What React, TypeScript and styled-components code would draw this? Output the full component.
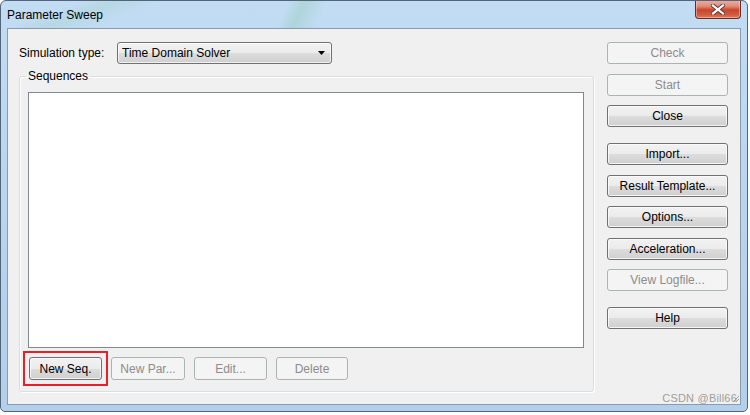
import React from 'react';
import styled, { createGlobalStyle, css } from 'styled-components';

const Global = createGlobalStyle`
  html, body { margin: 0; padding: 0; background: #ffffff; }
  body {
    width: 750px;
    height: 415px;
    overflow: hidden;
    font-family: "Liberation Sans", Arial, sans-serif;
    font-size: 12px;
    color: #000;
  }
  * { box-sizing: border-box; }
`;

const Window = styled.div`
  position: relative;
  width: 748px;
  height: 412px;
  border: 1px solid #52657a;
  border-radius: 6px 6px 5px 5px;
  background: linear-gradient(180deg, #c2dcf3 0%, #b7d3ee 60%, #b2cfeb 100%);
  padding: 0 6px 6px 6px;
  display: flex;
  flex-direction: column;
  overflow: hidden;
`;

const TitleBar = styled.div`
  height: 27px;
  flex: 0 0 27px;
  display: flex;
  align-items: flex-start;
  background:
    linear-gradient(115deg, transparent 38%, rgba(140, 200, 170, 0.35) 40%, transparent 43%),
    linear-gradient(160deg, transparent 10%, rgba(150, 205, 180, 0.25) 14%, transparent 20%);
  margin: 0 -6px;
  padding: 0 6px;
`;

const Title = styled.div`
  font-size: 12px;
  line-height: 14px;
  margin-top: 7px;
  color: #000;
`;

const CloseButton = styled.div`
  margin-left: auto;
  margin-top: -1px;
  width: 46px;
  height: 19px;
  border: 1px solid #6e2a22;
  border-top: none;
  border-radius: 0 0 4px 4px;
  background: linear-gradient(180deg, #eab1a4 0%, #e08b78 35%, #c9452d 55%, #cf5a3e 80%, #e07a55 100%);
  box-shadow: inset 0 0 0 1px rgba(255, 220, 210, 0.45);
  display: flex;
  align-items: center;
  justify-content: center;
`;

const Client = styled.div`
  flex: 1;
  border: 1px solid #8a9bad;
  background: #f0f0f0;
  display: flex;
  padding: 13px 12px 0 11px;
  gap: 13px;
`;

const LeftCol = styled.div`
  width: 575px;
  display: flex;
  flex-direction: column;
`;

const TypeRow = styled.div`
  display: flex;
  align-items: center;
  height: 22px;
`;

const Label = styled.span`
  width: 98px;
  line-height: 14px;
`;

const Select = styled.div`
  width: 215px;
  height: 22px;
  border: 1px solid #707070;
  border-radius: 3px;
  background: linear-gradient(180deg, #f2f2f2 0%, #ebebeb 50%, #dddddd 50%, #cfcfcf 100%);
  box-shadow: inset 0 0 0 1px rgba(255, 255, 255, 0.7);
  display: flex;
  align-items: center;
  padding: 0 6px 0 4px;
  line-height: 14px;
`;

const SelectText = styled.span`
  flex: 1;
`;

const Group = styled.fieldset`
  margin: 5px 0 0 0;
  padding: 0 9px 11px 8px;
  min-width: 0;
  border: 1px solid #d5dfe5;
  border-radius: 3px;
  box-shadow: inset 1px 1px 0 #ffffff, 1px 1px 0 #ffffff;
`;

const Legend = styled.legend`
  margin-left: -2px;
  padding: 0 2px;
  font-size: 12px;
  line-height: 14px;
`;

const ListBox = styled.div`
  margin-top: 9px;
  height: 256px;
  border: 1px solid #828790;
  background: #ffffff;
`;

const ButtonRow = styled.div`
  display: flex;
  gap: 9px;
  margin-top: 9px;
  padding-left: 1px;
`;

const Highlight = styled.div`
  display: flex;
  outline: 2px solid #e8202a;
  outline-offset: 4px;
`;

const Btn = styled.div<{ $disabled?: boolean; $w?: number }>`
  width: ${(p) => (p.$w ? `${p.$w}px` : '100%')};
  height: 23px;
  border-radius: 3px;
  display: flex;
  align-items: center;
  justify-content: center;
  line-height: 14px;
  white-space: nowrap;
  ${(p) =>
    p.$disabled
      ? css`
          border: 1px solid #adb2b5;
          background: #f4f4f4;
          color: #8c8c8c;
        `
      : css`
          border: 1px solid #707070;
          background: linear-gradient(180deg, #f2f2f2 0%, #ebebeb 50%, #dddddd 50%, #cfcfcf 100%);
          box-shadow: inset 0 0 0 1px rgba(252, 252, 252, 0.8);
          color: #000;
        `}
`;

const RightCol = styled.div`
  width: 121px;
  display: flex;
  flex-direction: column;
  gap: 9.5px;
`;

const RightBtn = styled(Btn)<{ $groupStart?: boolean }>`
  height: 22px;
  flex: 0 0 22px;
  margin-top: ${(p) => (p.$groupStart ? '6.5px' : '0')};
`;

const Watermark = styled.div`
  position: absolute;
  right: 10px;
  bottom: 7px;
  font-size: 11px;
  line-height: 12px;
  color: rgba(140, 140, 140, 0.85);
  letter-spacing: 0.2px;
`;

const Grip = styled.svg`
  position: absolute;
  right: 7px;
  bottom: 8px;
`;

export default function App() {
  return (
    <>
      <Global />
      <Window>
        <TitleBar>
          <Title>Parameter Sweep</Title>
          <CloseButton>
            <svg width="14" height="11" viewBox="0 0 14 11">
              <path
                d="M2 1.5 L12 9.5 M12 1.5 L2 9.5"
                stroke="#5a3a36"
                strokeWidth="4"
                strokeLinecap="square"
              />
              <path
                d="M2 1.5 L12 9.5 M12 1.5 L2 9.5"
                stroke="#ffffff"
                strokeWidth="2.2"
                strokeLinecap="square"
              />
            </svg>
          </CloseButton>
        </TitleBar>
        <Client>
          <LeftCol>
            <TypeRow>
              <Label>Simulation type:</Label>
              <Select>
                <SelectText>Time Domain Solver</SelectText>
                <svg width="7" height="4" viewBox="0 0 7 4">
                  <path d="M0 0 H7 L3.5 4 Z" fill="#000" />
                </svg>
              </Select>
            </TypeRow>
            <Group>
              <Legend>Sequences</Legend>
              <ListBox />
              <ButtonRow>
                <Highlight>
                  <Btn $w={73}>New Seq.</Btn>
                </Highlight>
                <Btn $w={74} $disabled>New Par...</Btn>
                <Btn $w={73} $disabled>Edit...</Btn>
                <Btn $w={72} $disabled>Delete</Btn>
              </ButtonRow>
            </Group>
          </LeftCol>
          <RightCol>
            <RightBtn $disabled>Check</RightBtn>
            <RightBtn $disabled>Start</RightBtn>
            <RightBtn>Close</RightBtn>
            <RightBtn $groupStart>Import...</RightBtn>
            <RightBtn>Result Template...</RightBtn>
            <RightBtn>Options...</RightBtn>
            <RightBtn>Acceleration...</RightBtn>
            <RightBtn $disabled>View Logfile...</RightBtn>
            <RightBtn $groupStart>Help</RightBtn>
          </RightCol>
        </Client>
        <Watermark>CSDN @Bill66</Watermark>
        <Grip width="8" height="8" viewBox="0 0 8 8">
          <path d="M7 1 L1 7 M7 4 L4 7" stroke="#9a9a9a" strokeWidth="1" />
        </Grip>
      </Window>
    </>
  );
}
